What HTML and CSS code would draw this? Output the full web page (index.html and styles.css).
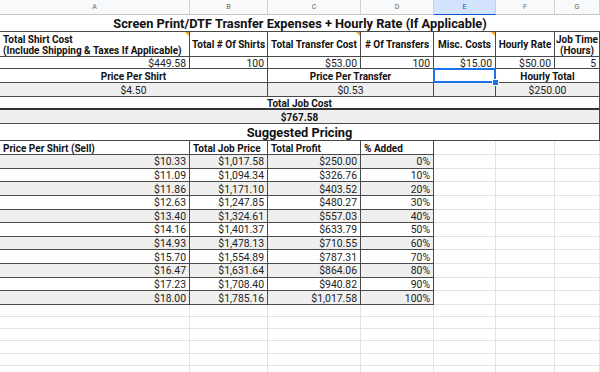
FILE: index.html
```html
<!DOCTYPE html>
<html>
<head>
<meta charset="utf-8">
<link rel="stylesheet" href="styles.css">
</head>
<body>
<div class="sheet">
  <div class="ch">A</div><div class="ch">B</div><div class="ch">C</div><div class="ch">D</div><div class="ch sel">E</div><div class="ch">F</div><div class="ch">G</div>

  <div class="c span7 ctr title bd">Screen Print/DTF Trasnfer Expenses + Hourly Rate (If Applicable)</div>

  <div class="c k bold hdr note">Total Shirt Cost<br>(Include Shipping &amp; Taxes If Applicable)</div>
  <div class="c k bold hdr ctr">Total # Of Shirts</div>
  <div class="c k bold hdr ctr note">Total Transfer Cost</div>
  <div class="c k bold hdr ctr"># Of Transfers</div>
  <div class="c k bold hdr ctr note">Misc. Costs</div>
  <div class="c k bold hdr ctr">Hourly Rate</div>
  <div class="c k bold hdr ctr tight">Job Time<br>(Hours)</div>

  <div class="c k r">$449.58</div>
  <div class="c k r">100</div>
  <div class="c k r">$53.00</div>
  <div class="c k r">100</div>
  <div class="c k r">$15.00</div>
  <div class="c k r">$50.00</div>
  <div class="c k r">5</div>

  <div class="c span2 k bold ctr">Price Per Shirt</div>
  <div class="c span2 k bold ctr">Price Per Transfer</div>
  <div class="c k active"></div>
  <div class="c span2 k bold ctr">Hourly Total</div>

  <div class="c span2 k g ctr">$4.50</div>
  <div class="c span2 k g ctr">$0.53</div>
  <div class="c k g"></div>
  <div class="c span2 k g ctr">$250.00</div>

  <div class="c span7 k bold ctr thick">Total Job Cost</div>
  <div class="c span7 k g bold ctr">$767.58</div>
  <div class="c span7 k bold ctr title">Suggested Pricing</div>

  <div class="c k bold">Price Per Shirt (Sell)</div>
  <div class="c k bold">Total Job Price</div>
  <div class="c k bold">Total Profit</div>
  <div class="c k bold">% Added</div>
  <div class="c"></div><div class="c"></div><div class="c"></div>

  <div class="c k g r">$10.33</div><div class="c k g r">$1,017.58</div><div class="c k g r">$250.00</div><div class="c k g r">0%</div><div class="c"></div><div class="c"></div><div class="c"></div>
  <div class="c k r">$11.09</div><div class="c k r">$1,094.34</div><div class="c k r">$326.76</div><div class="c k r">10%</div><div class="c"></div><div class="c"></div><div class="c"></div>
  <div class="c k g r">$11.86</div><div class="c k g r">$1,171.10</div><div class="c k g r">$403.52</div><div class="c k g r">20%</div><div class="c"></div><div class="c"></div><div class="c"></div>
  <div class="c k r">$12.63</div><div class="c k r">$1,247.85</div><div class="c k r">$480.27</div><div class="c k r">30%</div><div class="c"></div><div class="c"></div><div class="c"></div>
  <div class="c k g r">$13.40</div><div class="c k g r">$1,324.61</div><div class="c k g r">$557.03</div><div class="c k g r">40%</div><div class="c"></div><div class="c"></div><div class="c"></div>
  <div class="c k r">$14.16</div><div class="c k r">$1,401.37</div><div class="c k r">$633.79</div><div class="c k r">50%</div><div class="c"></div><div class="c"></div><div class="c"></div>
  <div class="c k g r">$14.93</div><div class="c k g r">$1,478.13</div><div class="c k g r">$710.55</div><div class="c k g r">60%</div><div class="c"></div><div class="c"></div><div class="c"></div>
  <div class="c k r">$15.70</div><div class="c k r">$1,554.89</div><div class="c k r">$787.31</div><div class="c k r">70%</div><div class="c"></div><div class="c"></div><div class="c"></div>
  <div class="c k g r">$16.47</div><div class="c k g r">$1,631.64</div><div class="c k g r">$864.06</div><div class="c k g r">80%</div><div class="c"></div><div class="c"></div><div class="c"></div>
  <div class="c k r">$17.23</div><div class="c k r">$1,708.40</div><div class="c k r">$940.82</div><div class="c k r">90%</div><div class="c"></div><div class="c"></div><div class="c"></div>
  <div class="c k g r">$18.00</div><div class="c k g r">$1,785.16</div><div class="c k g r">$1,017.58</div><div class="c k g r">100%</div><div class="c"></div><div class="c"></div><div class="c"></div>

  <div class="c"></div><div class="c"></div><div class="c"></div><div class="c"></div><div class="c"></div><div class="c"></div><div class="c"></div>
  <div class="c"></div><div class="c"></div><div class="c"></div><div class="c"></div><div class="c"></div><div class="c"></div><div class="c"></div>
  <div class="c"></div><div class="c"></div><div class="c"></div><div class="c"></div><div class="c"></div><div class="c"></div><div class="c"></div>
  <div class="c"></div><div class="c"></div><div class="c"></div><div class="c"></div><div class="c"></div><div class="c"></div><div class="c"></div>
  <div class="c"></div><div class="c"></div><div class="c"></div><div class="c"></div><div class="c"></div><div class="c"></div><div class="c"></div>
  <div class="c"></div><div class="c"></div><div class="c"></div><div class="c"></div><div class="c"></div><div class="c"></div><div class="c"></div>
</div>
</body>
</html>
```

FILE: styles.css
```css
html, body {
  margin: 0;
  padding: 0;
  background: #fff;
  overflow: hidden;
  width: 600px;
  height: 372px;
}

.sheet {
  display: grid;
  grid-template-columns: 190px 78px 93px 73px 62px 59px 45px;
  grid-template-rows: 15px 17px 25px 12px 14px 14px 13px 14px 17px 14px repeat(11, 13.64px) repeat(6, 12.2px);
  font-family: Roboto, "Liberation Sans", sans-serif;
  font-size: 10.4px;
  color: #222;
}

.ch {
  box-sizing: border-box;
  background: #f8f9fa;
  border-right: 1px solid #d0d0d0;
  border-bottom: 1px solid #c4c4c4;
  color: #666;
  font-size: 7px;
  display: flex;
  align-items: center;
  justify-content: center;
}

.ch.sel {
  background: #d3e3fd;
  color: #0b57d0;
  border-bottom: 1px solid #0b57d0;
}

.c {
  box-sizing: border-box;
  border-right: 1px solid #e2e2e2;
  border-bottom: 1px solid #e2e2e2;
  display: flex;
  align-items: center;
  padding: 1px 3px 0;
  white-space: nowrap;
  overflow: hidden;
  position: relative;
  line-height: 11px;
}

.k {
  border-right-color: #4a4a4a;
  border-bottom-color: #4a4a4a;
}

.span2 { grid-column: span 2; }
.span7 { grid-column: span 7; }

.r { justify-content: flex-end; }
.ctr { justify-content: center; text-align: center; }
.bold { font-weight: 700; color: #111; font-size: 10px; }
.g { background: #efefef; }

.tight { padding: 1px 0 0; }

.title {
  font-size: 12.8px;
  font-weight: 700;
  color: #111;
}

.bd { border-bottom: 1px solid #4a4a4a; border-right: none; }

.hdr { white-space: nowrap; }

.thick { border-bottom: 2px solid #333; }

.note::before {
  content: "";
  position: absolute;
  top: 0;
  right: 0;
  border-top: 4px solid #f4a722;
  border-left: 4px solid transparent;
}

.active::after {
  content: "";
  position: absolute;
  left: -1px;
  top: -1px;
  right: -1px;
  bottom: -1px;
  border: 2px solid #1a73e8;
}

.active {
  overflow: visible;
  z-index: 2;
}

.active::before {
  content: "";
  position: absolute;
  right: -4px;
  bottom: -4px;
  width: 5px;
  height: 5px;
  background: #1a73e8;
  border: 1px solid #fff;
  border-radius: 1px;
  z-index: 3;
}
```
